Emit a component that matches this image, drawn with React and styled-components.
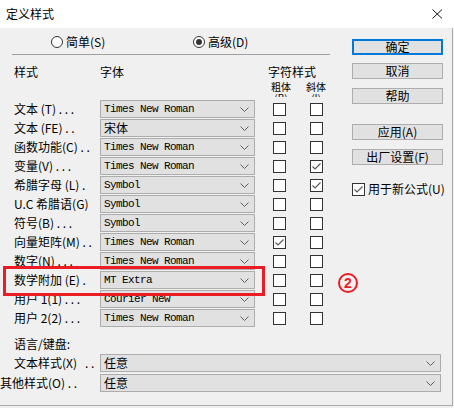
import React from 'react'
import styled, { createGlobalStyle } from 'styled-components'

const GlobalStyle = createGlobalStyle`
    html, body {
        margin: 0;
        padding: 0;
        background: #f0f0f0;
    }
    body {
        font-family: "Noto Sans CJK SC", "Liberation Sans", sans-serif;
        font-size: 12px;
        color: #000;
    }
`

const Window = styled.div`
    position: relative;
    width: 454px;
    height: 408px;
    overflow: hidden;
    background: #f0f0f0;
`

const TitleBar = styled.div`
    height: 28px;
    background: #fff;
    display: flex;
    align-items: center;
    justify-content: space-between;
    padding: 0 11px 0 6px;
    box-sizing: border-box;
    font-size: 12px;
    line-height: 14px;
`

const Body = styled.div`
    width: 453px;
    height: 378px;
    box-sizing: border-box;
    border-right: 1px solid #a9a9a9;
    border-bottom: 1px solid #a9a9a9;
    display: flex;
    flex-direction: column;
`

const Top = styled.div`
    display: flex;
`

const LeftPanel = styled.div`
    width: 340px;
    display: flex;
    flex-direction: column;
`

const RightPanel = styled.div`
    margin-left: 12px;
    padding-top: 11px;
    width: 91px;
    display: flex;
    flex-direction: column;
`

const RadioRow = styled.div`
    display: flex;
    height: 14px;
    margin-top: 7px;
    padding-left: 51px;
`

const RadioItem = styled.label`
    display: flex;
    align-items: center;
    width: ${p => p.width || 'auto'};
    line-height: 14px;
`

const RadioCircle = styled.span`
    width: 12px;
    height: 12px;
    box-sizing: border-box;
    border: 1px solid #333;
    border-radius: 50%;
    background: #fff;
    display: flex;
    align-items: center;
    justify-content: center;
    margin-right: 3px;
    &::after {
        content: '';
        width: 6px;
        height: 6px;
        border-radius: 50%;
        background: ${p => p.checked ? '#333' : 'transparent'};
    }
`

const Separator = styled.div`
    margin: 5px 0 0 12px;
    width: 318px;
    height: 1px;
    background: #a0a0a0;
`

const HeaderRow = styled.div`
    display: flex;
    height: 42px;
    box-sizing: border-box;
    padding-top: 10px;
    overflow: hidden;
    line-height: 14px;
`

const ColHead = styled.div`
    width: ${p => p.width}px;
    margin-left: ${p => p.left || 0}px;
    white-space: nowrap;
`

const StyleHead = styled.div`
    display: flex;
    flex-direction: column;
    white-space: nowrap;
`

const SubHeads = styled.div`
    display: flex;
    margin-top: 2px;
    line-height: 11px;
    font-size: 10px;
`

const SubHead = styled.div`
    width: ${p => p.width}px;
    margin-left: ${p => p.left || 0}px;
    display: flex;
    flex-direction: column;
    align-items: center;
    white-space: nowrap;
`

const FontGrid = styled.div`
    margin-top: 3px;
    padding-left: 14px;
    display: grid;
    grid-template-columns: 86px 155px 18px 13px 24px 13px;
    grid-auto-rows: 18px;
    row-gap: 1px;
    align-items: center;
`

const Label = styled.div`
    white-space: pre;
    overflow: hidden;
    line-height: 14px;
    margin-left: ${p => p.shift || 0}px;
`

const Select = styled.div`
    height: 18px;
    box-sizing: border-box;
    border: 1px solid #adadad;
    background: #e1e1e1;
    display: flex;
    align-items: center;
    justify-content: space-between;
    padding: 0 5px 0 3px;
    font-family: ${p => p.cjk ? '"Noto Sans CJK SC", sans-serif' : '"Liberation Mono", monospace'};
    font-size: ${p => p.cjk ? '12px' : '11px'};
    letter-spacing: ${p => p.cjk ? '0' : '-0.6px'};
    line-height: 14px;
    white-space: nowrap;
`

const Box = styled.span`
    width: 13px;
    height: 13px;
    flex: none;
    box-sizing: border-box;
    border: 1px solid #333;
    background: #fff;
    display: flex;
    align-items: center;
    justify-content: center;
`

const Spacer = styled.span``

const LangLabel = styled.div`
    margin: 10px 0 0 14px;
    line-height: 14px;
`

const BottomGrid = styled.div`
    margin-top: 3px;
    display: grid;
    grid-template-columns: 100px 341px;
    grid-auto-rows: 18px;
    row-gap: 2px;
    align-items: center;
`

const Button = styled.div`
    height: 16px;
    box-sizing: border-box;
    margin-top: ${p => p.gap || 0}px;
    border: ${p => p.primary ? '2px solid #0078d7' : '1px solid #adadad'};
    background: #e1e1e1;
    display: flex;
    align-items: center;
    justify-content: center;
    line-height: 14px;
    white-space: nowrap;
`

const CheckRow = styled.label`
    display: flex;
    align-items: center;
    margin-top: 17px;
    line-height: 14px;
    gap: 3px;
    white-space: nowrap;
`

const Annotation = styled.div`
    position: absolute;
    left: 3px;
    top: 266px;
    width: 262px;
    height: 30px;
    box-sizing: border-box;
    border: 3px solid #ec1c24;
`

const Badge = styled.div`
    position: absolute;
    left: 338px;
    top: 273px;
    width: 20px;
    height: 20px;
    box-sizing: border-box;
    border: 2px solid #ec1c24;
    border-radius: 50%;
    color: #ec1c24;
    font-family: "Liberation Sans", sans-serif;
    font-weight: bold;
    font-size: 14px;
    line-height: 16px;
    text-align: center;
`

const Chevron = () => (
    <svg width="9" height="5" viewBox="0 0 9 5">
        <polyline points="0.5,0.5 4.5,4.5 8.5,0.5" fill="none" stroke="#606060" strokeWidth="1" />
    </svg>
)

const Tick = () => (
    <svg width="11" height="11" viewBox="0 0 11 11">
        <polyline points="1.5,5.5 4,8 9.5,2.5" fill="none" stroke="#555" strokeWidth="1.1" />
    </svg>
)

const Check = ({ on }) => <Box>{on && <Tick />}</Box>

const rows = [
    { label: '文本 (T) . . .', font: 'Times New Roman' },
    { label: '文本 (FE) . .', font: '宋体', cjk: true },
    { label: '函数功能(C) . .', font: 'Times New Roman' },
    { label: '变量(V) . . .', font: 'Times New Roman', i: true },
    { label: '希腊字母 (L) .', font: 'Symbol', i: true },
    { label: 'U.C 希腊语(G)', font: 'Symbol' },
    { label: '符号(B) . . .', font: 'Symbol' },
    { label: '向量矩阵(M) . .', font: 'Times New Roman', b: true },
    { label: '数字(N) . . .', font: 'Times New Roman' },
    { label: '数学附加 (E) .', font: 'MT Extra' },
    { label: '用户 1(1) . . .', font: 'Courier New' },
    { label: '用户 2(2) . . .', font: 'Times New Roman' },
]

function App () {
    return (
        <Window>
            <GlobalStyle />
            <TitleBar>
                <span>定义样式</span>
                <svg width="11" height="10" viewBox="0 0 11 10">
                    <path d="M0.5 0.5 L10 9.5 M10 0.5 L0.5 9.5" stroke="#111" strokeWidth="1" fill="none" />
                </svg>
            </TitleBar>
            <Body>
                <Top>
                    <LeftPanel>
                        <RadioRow>
                            <RadioItem width="142px"><RadioCircle />简单(S)</RadioItem>
                            <RadioItem><RadioCircle checked />高级(D)</RadioItem>
                        </RadioRow>
                        <Separator />
                        <HeaderRow>
                            <ColHead width={86} left={14}>样式</ColHead>
                            <ColHead width={168}>字体</ColHead>
                            <StyleHead>
                                <span>字符样式</span>
                                <SubHeads>
                                    <SubHead width={20} left={3}><span>粗体</span><span>(B)</span></SubHead>
                                    <SubHead width={20} left={15}><span>斜体</span><span>(I)</span></SubHead>
                                </SubHeads>
                            </StyleHead>
                        </HeaderRow>
                        <FontGrid>
                            {rows.map(r => (
                                <React.Fragment key={r.label}>
                                    <Label>{r.label}</Label>
                                    <Select cjk={r.cjk}><span>{r.font}</span><Chevron /></Select>
                                    <Spacer />
                                    <Check on={r.b} />
                                    <Spacer />
                                    <Check on={r.i} />
                                </React.Fragment>
                            ))}
                        </FontGrid>
                    </LeftPanel>
                    <RightPanel>
                        <Button primary>确定</Button>
                        <Button gap={8}>取消</Button>
                        <Button gap={9}>帮助</Button>
                        <Button gap={20}>应用(A)</Button>
                        <Button gap={9}>出厂设置(F)</Button>
                        <CheckRow><Check on />用于新公式(U)</CheckRow>
                    </RightPanel>
                </Top>
                <LangLabel>语言/键盘:</LangLabel>
                <BottomGrid>
                    <Label shift={14}>文本样式(X)   . .</Label>
                    <Select cjk><span>任意</span><Chevron /></Select>
                    <Label>其他样式(O) . .</Label>
                    <Select cjk><span>任意</span><Chevron /></Select>
                </BottomGrid>
            </Body>
            <Annotation />
            <Badge>2</Badge>
        </Window>
    )
}

export default App
